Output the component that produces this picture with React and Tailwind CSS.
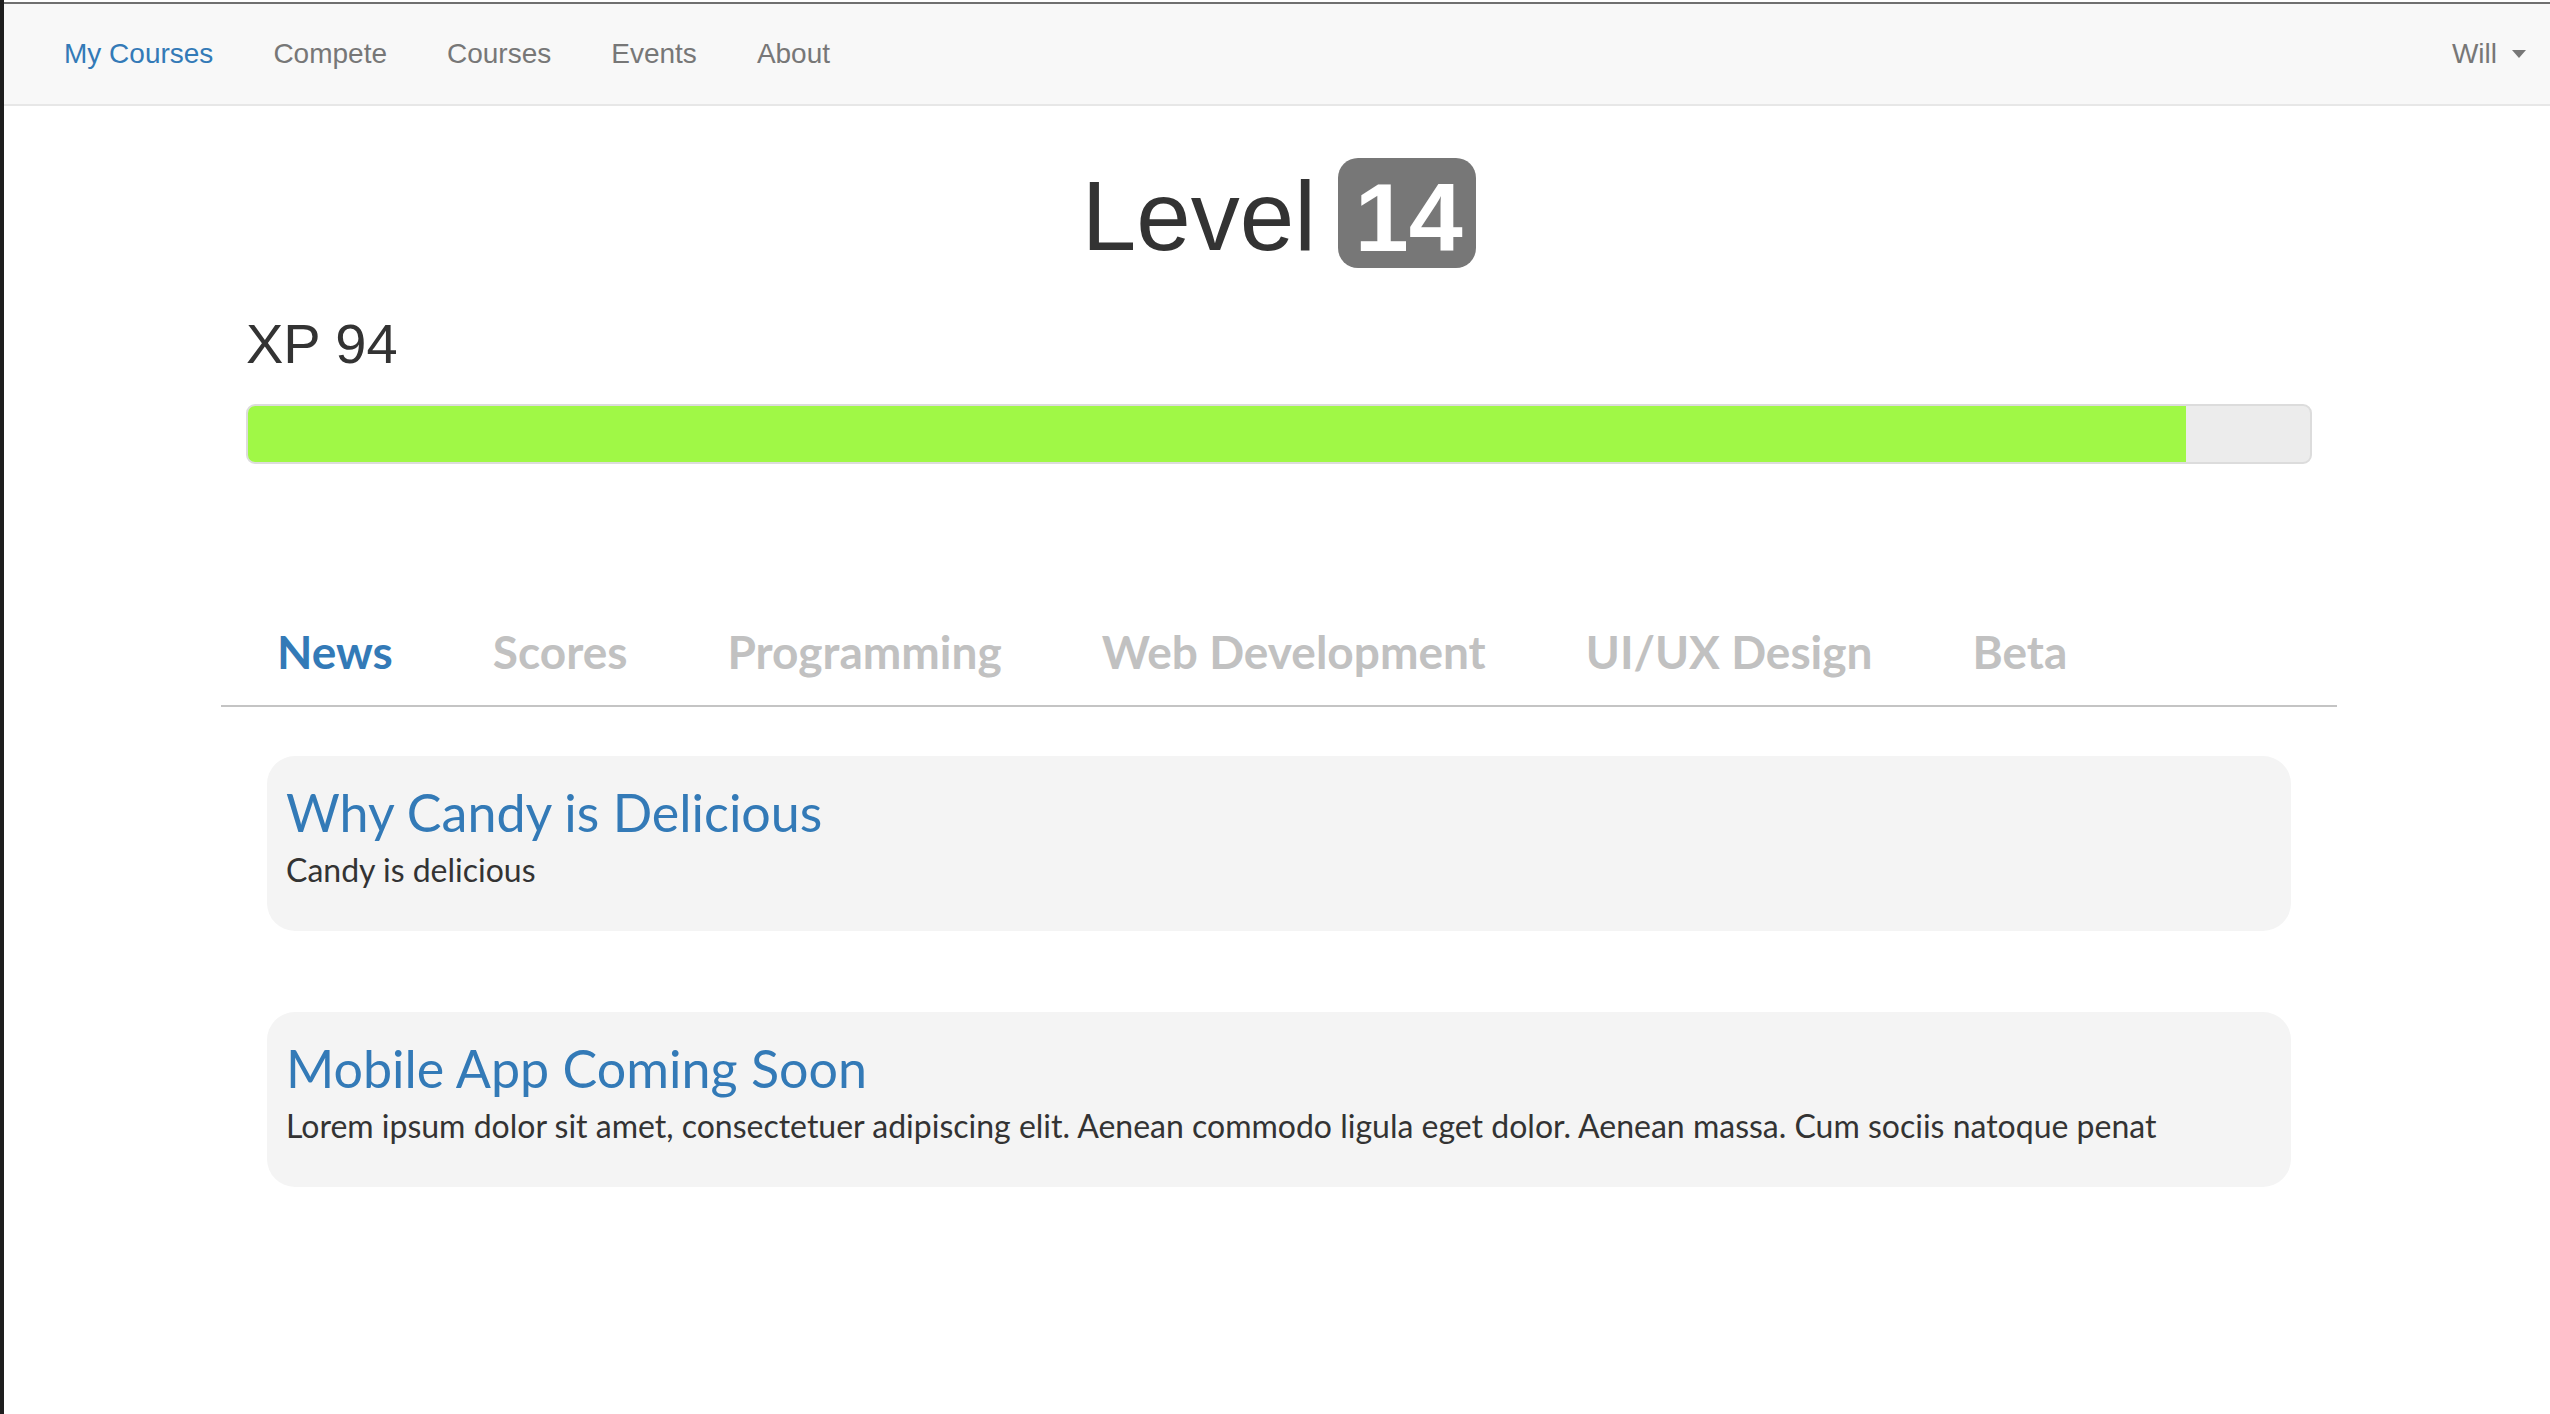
import React from "react";

const navLinks = [
  { label: "My Courses", active: true },
  { label: "Compete" },
  { label: "Courses" },
  { label: "Events" },
  { label: "About" },
];

const tabs = ["News", "Scores", "Programming", "Web Development", "UI/UX Design", "Beta"];

const news = [
  { title: "Why Candy is Delicious", body: "Candy is delicious" },
  {
    title: "Mobile App Coming Soon",
    body: "Lorem ipsum dolor sit amet, consectetuer adipiscing elit. Aenean commodo ligula eget dolor. Aenean massa. Cum sociis natoque penat",
  },
];

const helv = { fontFamily: '"Liberation Sans", Arial, sans-serif' };
const treb = { fontFamily: 'Lato, "Open Sans", sans-serif' };

const App = () => {
  const xp = 94;

  return (
    <div className="min-h-screen bg-white border-l-[4px] border-l-[#1e1e1e] pt-[2px]" style={helv}>
      {/* navbar */}
      <nav className="h-[104px] bg-[#f8f8f8] border-t-2 border-t-[#707070] border-b-2 border-b-[#e7e7e7] flex items-center justify-between pl-[30px] pr-[24px]">
        <ul className="flex items-center">
          {navLinks.map((link) => (
            <li key={link.label}>
              <a
                href="#"
                className={`block px-[30px] text-[28px] leading-none ${link.active ? "text-[#337ab7]" : "text-[#777]"}`}
              >
                {link.label}
              </a>
            </li>
          ))}
        </ul>
        <a href="#" className="flex items-center text-[28px] leading-none text-[#777]">
          Will
          <span className="ml-[15px] w-0 h-0 border-x-[7px] border-x-transparent border-t-[8px] border-t-[#777]"></span>
        </a>
      </nav>

      <div className="pl-[4px]">
        <main className="mx-auto w-[2116px]">
          {/* level */}
          <div className="flex justify-center items-start mt-[52px]">
            <span className="mt-[9px] text-[98px] leading-none text-[#333]">Level</span>
            <span className="ml-[22px] h-[110px] w-[138px] rounded-[20px] bg-[#777] flex justify-center pt-[11px] pl-[3px] text-[97px] leading-none font-bold text-white">
              14
            </span>
          </div>

          {/* xp */}
          <div className="px-[25px]">
            <h2 className="mt-[48px] text-[56px] leading-none text-[#333]">XP {xp}</h2>
            <div className="mt-[32px] h-[60px] rounded-[9px] border-2 border-[#dcdcdc] bg-[#ececec] overflow-hidden">
              <div className="h-full bg-[#a0f846]" style={{ width: `${xp}%` }}></div>
            </div>
          </div>

          {/* tabs */}
          <ul className="mt-[165px] flex border-b-2 border-b-[#c4c4c4] pl-[6px] pb-[30px]" style={treb}>
            {tabs.map((tab, i) => (
              <li key={tab}>
                <a
                  href="#"
                  className={`block px-[50px] text-[46px] leading-none font-bold ${i === 0 ? "text-[#337ab7]" : "text-[#c1c1c1]"}`}
                >
                  {tab}
                </a>
              </li>
            ))}
          </ul>

          {/* news cards */}
          <div className="px-[46px] pt-[49px] flex flex-col gap-[81px]" style={treb}>
            {news.map((item) => (
              <div key={item.title} className="h-[175px] rounded-[28px] bg-[#f4f4f4] px-[19px] pt-[30px]">
                <h3 className="text-[52px] leading-none text-[#337ab7]">{item.title}</h3>
                <p className="mt-[16px] text-[32px] leading-none text-[#333]">{item.body}</p>
              </div>
            ))}
          </div>
        </main>
      </div>
    </div>
  );
};

export default App;
